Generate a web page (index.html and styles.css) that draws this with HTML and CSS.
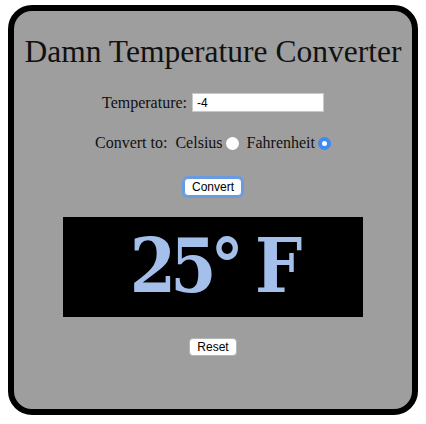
FILE: index.html
```html
<!DOCTYPE html>
<html>
<head>
<meta charset="utf-8">
<link rel="stylesheet" href="styles.css">
</head>
<body>
<div class="box">
  <h1 class="title">Damn Temperature Converter</h1>
  <div class="row temp">
    <label class="lbl" for="t">Temperature:</label>
    <input class="field" id="t" type="text" value="-4">
  </div>
  <div class="row radios">
    <span class="lbl">Convert to:</span>
    <label class="opt">Celsius<span class="radio"></span></label>
    <label class="opt">Fahrenheit<span class="radio checked"></span></label>
  </div>
  <div class="row convert">
    <button class="btn focus">Convert</button>
  </div>
  <div class="display">25° F</div>
  <div class="row reset">
    <button class="btn">Reset</button>
  </div>
</div>
</body>
</html>
```
FILE: styles.css
```css
html, body { margin: 0; padding: 0; background: #fff; }
body { padding: 5px 8px 0 8px; font-family: "Liberation Serif", serif; }
.box {
  box-sizing: border-box;
  width: 410px;
  height: 410px;
  border: 6px solid #000;
  border-radius: 24px;
  background: #9e9e9e;
  display: flex;
  flex-direction: column;
  align-items: center;
  padding-top: 21px;
}
.title {
  margin: 0;
  font-family: "Liberation Serif", serif;
  font-weight: normal;
  font-size: 31.5px;
  line-height: 40px;
  color: #111;
}
.row { display: flex; align-items: center; justify-content: center; }
.lbl { font-size: 16px; color: #111; }
.temp { margin-top: 21px; gap: 5px; }
.field {
  box-sizing: border-box;
  width: 132px; height: 19px;
  border: 1px solid #c8c8c8;
  background: #fff;
  font-family: "Liberation Sans", sans-serif;
  font-size: 12px;
  padding: 0 4px;
  margin: 0;
  outline: none;
}
.radios { margin-top: 22px; gap: 8px; }
.opt { display: flex; align-items: center; gap: 3px; font-size: 16px; color: #111; }
.radio {
  box-sizing: border-box;
  width: 13px; height: 13px; border-radius: 50%;
  background: #fff;
  display: inline-block;
}
.radio.checked { border: 4.5px solid #3b8cf5; background: #fff; }
.btn {
  font-family: "Liberation Sans", sans-serif;
  font-size: 12px;
  color: #000;
  background: #fff;
  border: 1px solid #b5b5b5;
  border-radius: 4px;
  padding: 0 7px;
  height: 18px;
  line-height: 16px;
  margin: 0;
}
.btn.focus { box-shadow: 0 0 0 2px #6a9be0; border-color: #6a9be0; }
.convert { margin-top: 26px; }
.display {
  margin-top: 21px;
  width: 300px; height: 100px;
  background: #000;
  color: #a3bfea;
  font-family: "DejaVu Serif Condensed", "DejaVu Serif", serif;
  font-stretch: condensed;
  font-weight: bold;
  font-size: 74px;
  letter-spacing: -6px;
  line-height: 98px;
  text-align: center;
}
.reset { margin-top: 21px; }
```
